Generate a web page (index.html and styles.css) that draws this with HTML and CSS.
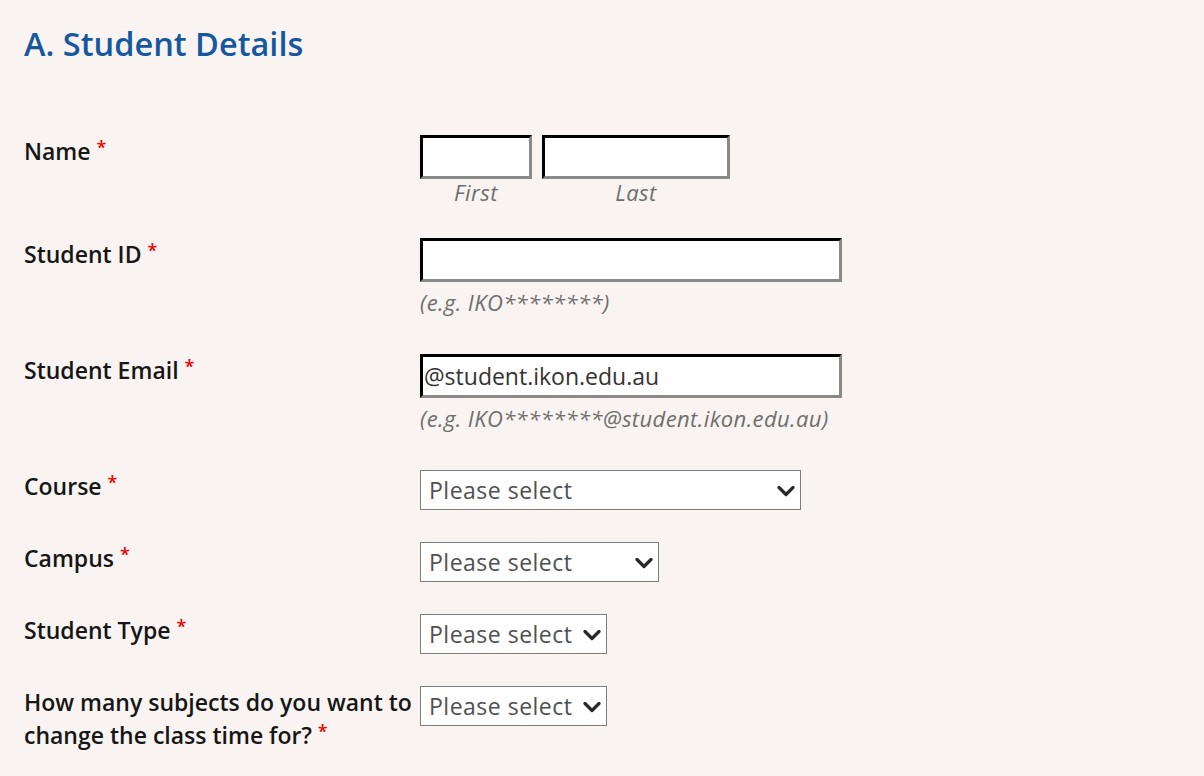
FILE: index.html
```html
<!DOCTYPE html>
<html>
<head>
<meta charset="utf-8">
<link rel="stylesheet" href="styles.css">
</head>
<body>
<div class="page">
  <h2 class="section-title">A. Student Details</h2>
  <form class="form">
    <div class="row">
      <label class="label">Name <span class="req">*</span></label>
      <div class="field">
        <div class="name-group">
          <div class="name-part">
            <input class="text-input w-first" type="text">
            <span class="sub">First</span>
          </div>
          <div class="name-part">
            <input class="text-input w-last" type="text">
            <span class="sub">Last</span>
          </div>
        </div>
      </div>
    </div>
    <div class="row">
      <label class="label">Student ID <span class="req">*</span></label>
      <div class="field">
        <input class="text-input w-full" type="text">
        <div class="hint">(e.g. IKO********)</div>
      </div>
    </div>
    <div class="row">
      <label class="label">Student Email <span class="req">*</span></label>
      <div class="field">
        <input class="text-input w-full" type="text" value="@student.ikon.edu.au">
        <div class="hint">(e.g. IKO********@student.ikon.edu.au)</div>
      </div>
    </div>
    <div class="row">
      <label class="label">Course <span class="req">*</span></label>
      <div class="field">
        <div class="select-wrap w-course">
          <select class="select"><option>Please select</option></select>
          <svg class="chev" viewBox="0 0 18 12" width="18" height="12"><path d="M2 2.5 L9 9.5 L16 2.5" fill="none" stroke="#2a2a2a" stroke-width="3.2" stroke-linecap="round" stroke-linejoin="round"/></svg>
        </div>
      </div>
    </div>
    <div class="row">
      <label class="label">Campus <span class="req">*</span></label>
      <div class="field">
        <div class="select-wrap w-campus">
          <select class="select"><option>Please select</option></select>
          <svg class="chev" viewBox="0 0 18 12" width="18" height="12"><path d="M2 2.5 L9 9.5 L16 2.5" fill="none" stroke="#2a2a2a" stroke-width="3.2" stroke-linecap="round" stroke-linejoin="round"/></svg>
        </div>
      </div>
    </div>
    <div class="row">
      <label class="label">Student Type <span class="req">*</span></label>
      <div class="field">
        <div class="select-wrap w-small">
          <select class="select"><option>Please select</option></select>
          <svg class="chev" viewBox="0 0 18 12" width="18" height="12"><path d="M2 2.5 L9 9.5 L16 2.5" fill="none" stroke="#2a2a2a" stroke-width="3.2" stroke-linecap="round" stroke-linejoin="round"/></svg>
        </div>
      </div>
    </div>
    <div class="row">
      <label class="label">How many subjects do you want to change the class time for? <span class="req">*</span></label>
      <div class="field">
        <div class="select-wrap w-small">
          <select class="select"><option>Please select</option></select>
          <svg class="chev" viewBox="0 0 18 12" width="18" height="12"><path d="M2 2.5 L9 9.5 L16 2.5" fill="none" stroke="#2a2a2a" stroke-width="3.2" stroke-linecap="round" stroke-linejoin="round"/></svg>
        </div>
      </div>
    </div>
  </form>
</div>
</body>
</html>
```

FILE: styles.css
```css
html, body {
  margin: 0;
  padding: 0;
  background: #f9f4f1;
}
body {
  font-family: "Open Sans", "Noto Sans", "DejaVu Sans", sans-serif;
  color: #1b1b1b;
}
.page {
  padding: 24px 24px 0 24px;
}
.section-title {
  margin: 0;
  font-size: 32.5px;
  line-height: 40px;
  font-weight: 600;
  color: #15589f;
}
.form {
  margin-top: 71px;
  display: flex;
  flex-direction: column;
  gap: 32px;
}
.row {
  display: grid;
  grid-template-columns: 396px 1fr;
  align-items: start;
}
.label {
  font-size: 23px;
  font-weight: 600;
  line-height: 33px;
  padding-top: 0;
  color: #161616;
  letter-spacing: 0;
}
.req {
  color: #f00000;
  font-size: 18px;
  line-height: 0;
  vertical-align: 0.35em;
}
.field {
  display: flex;
  flex-direction: column;
  align-items: flex-start;
}
.name-group {
  display: flex;
  gap: 10px;
}
.name-part {
  display: flex;
  flex-direction: column;
  align-items: center;
}
.text-input {
  box-sizing: border-box;
  height: 44px;
  margin: 0;
  border: 3px inset #767676;
  border-top-color: #1a1a1a;
  border-left-color: #1a1a1a;
  border-bottom-color: #8a8a8a;
  border-right-color: #8a8a8a;
  background: #fff;
  font-family: inherit;
  font-size: 23px;
  color: #333;
  padding: 0 1px;
  outline: none;
}
.w-first { width: 112px; }
.w-last { width: 188px; }
.w-full { width: 422px; }
.sub {
  font-size: 22px;
  font-style: italic;
  line-height: 27px;
  letter-spacing: 0.5px;
  color: #6e6e6e;
}
.hint {
  font-size: 22px;
  font-style: italic;
  line-height: 28px;
  letter-spacing: 0.4px;
  margin-top: 6px;
  padding-bottom: 6px;
  color: #6e6e6e;
}
.select-wrap {
  position: relative;
  display: flex;
  height: 40px;
}
.select {
  box-sizing: border-box;
  width: 100%;
  height: 40px;
  margin: 0;
  border: 1.5px solid #7d7d7d;
  border-radius: 0;
  background: #fff;
  font-family: inherit;
  font-size: 23px;
  letter-spacing: 0.5px;
  color: #505050;
  padding: 0 4px 0 8px;
  appearance: none;
  -webkit-appearance: none;
  outline: none;
}
.chev {
  position: absolute;
  right: 6px;
  top: 15px;
  pointer-events: none;
}
.w-course { width: 381px; }
.w-campus { width: 239px; }
.w-small { width: 187px; }
```
